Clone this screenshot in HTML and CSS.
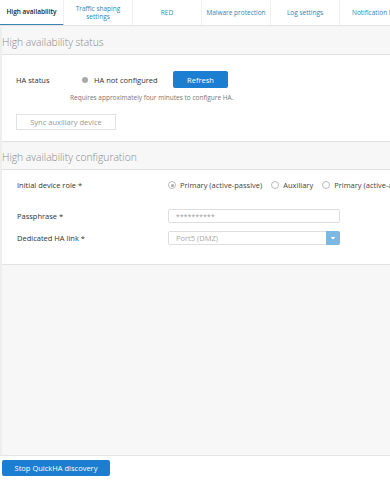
FILE: index.html
```html
<!DOCTYPE html>
<html lang="en">
<head>
  <meta charset="UTF-8">
  <title>High availability</title>
  <link rel="stylesheet" href="styles.css">
</head>
<body>
  <nav class="tabs">
    <div class="tab tab-active">High availability</div>
    <div class="tab">Traffic shaping<br>settings</div>
    <div class="tab">RED</div>
    <div class="tab">Malware protection</div>
    <div class="tab">Log settings</div>
    <div class="tab">Notification list</div>
  </nav>

  <div class="page">
    <h2 class="section-title">High availability status</h2>
    <div class="panel panel-status">
      <div class="status-row">
        <span class="label">HA status</span>
        <span class="dot"></span>
        <span class="status-text">HA not configured</span>
        <button class="btn btn-blue btn-refresh">Refresh</button>
      </div>
      <p class="hint">Requires approximately four minutes to configure HA.</p>
      <button class="btn btn-ghost">Sync auxiliary device</button>
    </div>

    <h2 class="section-title">High availability configuration</h2>
    <div class="panel panel-config">
      <div class="form-row row-role">
        <span class="label">Initial device role *</span>
        <div class="radios">
          <label class="radio radio-on"><span class="circle"></span>Primary (active-passive)</label>
          <label class="radio"><span class="circle"></span>Auxiliary</label>
          <label class="radio"><span class="circle"></span>Primary (active-active)</label>
        </div>
      </div>
      <div class="form-row row-pass">
        <span class="label">Passphrase *</span>
        <div class="input">**********</div>
      </div>
      <div class="form-row row-link">
        <span class="label">Dedicated HA link *</span>
        <div class="input select">
          <span>Port5 (DMZ)</span>
          <span class="caret">
            <svg viewBox="0 0 8 8" width="6" height="6"><path d="M1 2.5h6L4 6z" fill="#fff"/></svg>
          </span>
        </div>
      </div>
    </div>

    <div class="filler"></div>
  </div>

  <footer class="footer">
    <button class="btn btn-blue btn-stop">Stop QuickHA discovery</button>
  </footer>
</body>
</html>
```

FILE: styles.css
```css
* { margin: 0; padding: 0; box-sizing: border-box; }

body {
  width: 390px; height: 480px; overflow: hidden;
  font-family: 'Open Sans', 'Noto Sans', sans-serif; font-size: 7.5px;
  color: #333; background: #fff;
  display: flex; flex-direction: column;
}

.tabs {
  display: flex; height: 26px; border-bottom: 1px solid #e4e4e4;
  box-shadow: 0 1px 2px rgba(0,0,0,0.06); white-space: nowrap; overflow: hidden;
}
.tab {
  flex: 0 0 69px; display: flex; align-items: center; justify-content: center;
  text-align: center; color: #2a86b8; font-size: 6.5px; line-height: 8px;
  border-right: 1px solid #f0f0f0;
}
.tab:last-child { flex: 0 0 auto; padding-left: 12px; border-right: none; }
.tab-active {
  flex-basis: 64px; color: #222; font-weight: 600;
  border-bottom: 2px solid #3b83b4; margin-bottom: -1px;
}

.page {
  flex: 1; display: flex; flex-direction: column; overflow: hidden;
  background: #f7f7f7; border-left: 2px solid #eee;
  margin-top: 1px;
}

.section-title {
  font-size: 10.3px; font-weight: 300; color: #888;
  height: 28px; line-height: 30px;
  border-bottom: 1px solid #e2e2e2;
}

.panel { background: #fff; border-bottom: 1px solid #e2e2e2; }

.panel-status { height: 87px; padding: 16px 0 0 14px; }
.status-row { display: flex; align-items: center; height: 17px; }
.status-row .label { width: 66px; flex-shrink: 0; }
.dot {
  width: 6px; height: 6px; border-radius: 50%; background: #a9a9a9;
  margin-right: 6px;
}
.status-text { width: 79px; }
.hint { color: #777; font-size: 6.5px; margin: 5px 0 0 54px; }

.btn {
  font-family: inherit; border: none; cursor: pointer;
  display: flex; align-items: center; justify-content: center;
}
.btn-blue { background: #1c7ed0; color: #fff; border-radius: 2px; }
.btn-refresh { width: 55px; height: 17px; font-size: 7.5px; }
.btn-ghost {
  width: 100px; height: 16px; margin: 12px 0 0 0;
  background: #fff; border: 1px solid #e2e2e2; color: #999; font-size: 7.5px;
}

.panel-config { height: 95px; padding: 9px 0 0 15px; }
.form-row { display: flex; align-items: center; }
.form-row .label { width: 151px; flex-shrink: 0; }
.row-role { height: 12px; }
.row-pass { margin-top: 18px; height: 14px; }
.row-link { margin-top: 8px; height: 14px; }

.radios { display: flex; gap: 9px; white-space: nowrap; font-size: 7.5px; }
.radio { display: flex; align-items: center; gap: 4px; color: #444; }
.circle {
  width: 8px; height: 8px; border-radius: 50%; border: 1px solid #bbb;
  display: flex; align-items: center; justify-content: center;
}
.radio-on .circle::after {
  content: ''; width: 3px; height: 3px; border-radius: 50%; background: #aaa;
}

.input {
  width: 172px; height: 14px; border: 1px solid #dedede; border-radius: 2px;
  padding-left: 7px; display: flex; align-items: center; flex-shrink: 0;
  color: #999; font-size: 6.5px; letter-spacing: 0.3px;
}
.select { justify-content: space-between; padding-right: 0; font-size: 7.5px; color: #aaa; letter-spacing: 0; }
.caret {
  width: 14px; height: 14px; margin: -1px -1px -1px 0; background: #7db8e2;
  border-radius: 0 2px 2px 0; display: flex; align-items: center; justify-content: center;
}

.filler { flex: 1; }

.footer {
  height: 25px; border-top: 1px solid #e4e4e4; padding: 4px 0 0 2px; background: #fff;
}
.btn-stop { width: 108px; height: 16px; font-size: 7.5px; font-weight: 500; }
```
